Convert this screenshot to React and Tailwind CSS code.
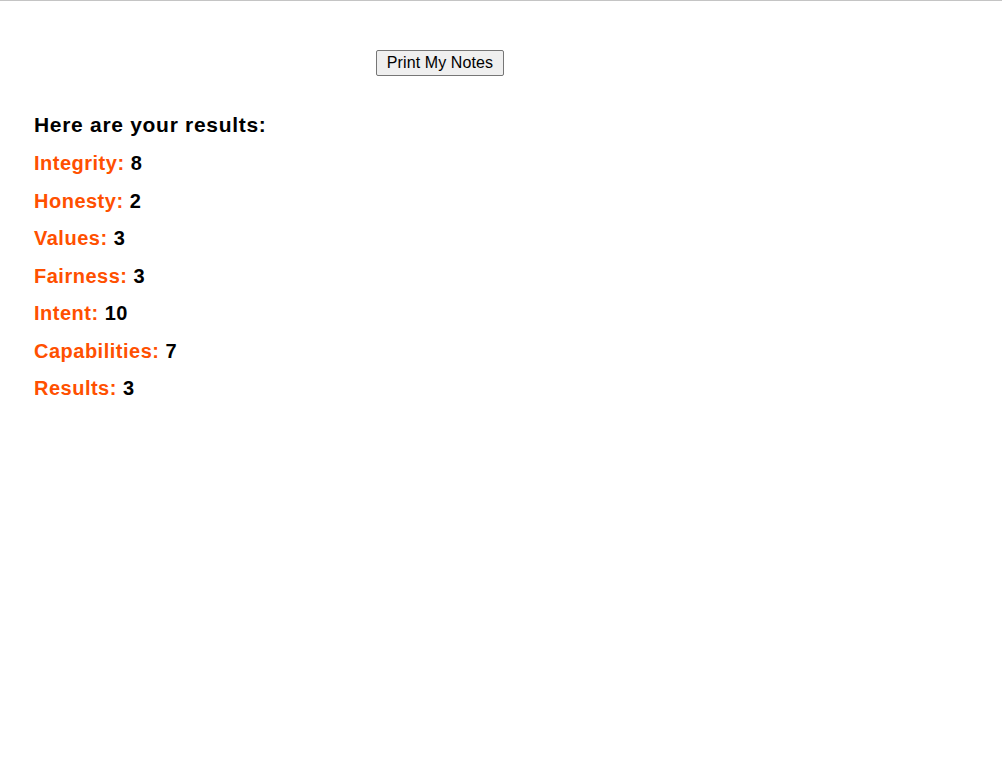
export default function App() {
  const results = [
    ['Integrity', 8],
    ['Honesty', 2],
    ['Values', 3],
    ['Fairness', 3],
    ['Intent', 10],
    ['Capabilities', 7],
    ['Results', 3],
  ];

  return (
    <div className="min-h-[770px] bg-white border-t border-[#c4c4c4] text-black" style={{ fontFamily: '"Liberation Sans", Arial, sans-serif' }}>
      <div className="pt-[49px] pl-[376px]">
        <button className="h-[26px] w-[128px] border border-[#767676] bg-[#efefef] rounded-[2px] text-[16px] leading-[18px] tracking-[0.1px] text-black">
          Print My Notes
        </button>
      </div>

      <div className="pl-[34px] pt-[35px]">
        <h3 className="text-[21px] font-bold leading-[28px] tracking-[0.7px]">Here are your results:</h3>
        <div className="pt-[6px]">
          {results.map(([name, score]) => (
            <div key={name} className="text-[20px] font-bold leading-[37.5px] tracking-[0.5px]">
              <span className="text-[#ff5000]">{name}:</span> {score}
            </div>
          ))}
        </div>
      </div>
    </div>
  );
}
